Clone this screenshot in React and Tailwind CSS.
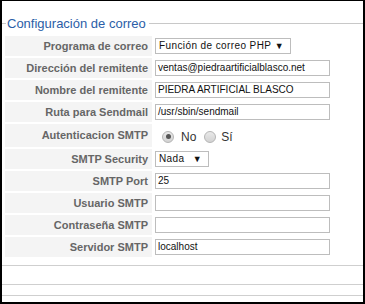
const font = "font-['Liberation_Sans',Arial,sans-serif]"

function Label({ children, tall }) {
  return (
    <div
      className={`w-[147px] ${tall ? "h-[23px]" : "h-[20px]"} bg-[#f4f4f4] flex items-center justify-end pr-[4px] text-[11px] font-bold text-[#666]`}
    >
      {children}
    </div>
  )
}

function TextBox({ value }) {
  return (
    <div className="w-[175px] h-[16px] border border-[#bdbdbd] bg-white flex items-center px-[2px] text-[10px] text-[#111] leading-none">
      {value}
    </div>
  )
}

function SelectBox({ value, width }) {
  return (
    <div
      className={`${width} h-[16px] border border-[#bdbdbd] bg-white flex items-center justify-between pl-[3px] pr-[6px] text-[10px] tracking-[0.4px] text-[#111] leading-none`}
    >
      <span>{value}</span>
      <span className="text-[9px]">▼</span>
    </div>
  )
}

function Radio({ checked }) {
  return (
    <div className="w-[12px] h-[12px] rounded-full border border-[#b5b5b5] bg-gradient-to-b from-[#e9e9e9] to-[#d2d2d2] flex items-center justify-center">
      {checked && <div className="w-[5px] h-[5px] rounded-full bg-[#555]" />}
    </div>
  )
}

function Row({ label, tall, children }) {
  return (
    <div className="flex items-center">
      <Label tall={tall}>{label}</Label>
      <div className="ml-[3px] flex items-center">{children}</div>
    </div>
  )
}

export default function App() {
  return (
    <div
      className={`${font} w-[365px] h-[304px] bg-white border-black border-t border-l-2 border-r-2 border-b-2 overflow-hidden flex flex-col`}
    >
      <div className="mt-[15px] h-[15px] flex items-center">
        <div className="w-[4px] h-px bg-[#c8c8c8]" />
        <span className="px-[1px] text-[13px] leading-none text-[#2b5ea7]">Configuración de correo</span>
        <div className="flex-1 ml-[2px] h-px bg-[#c8c8c8]" />
      </div>

      <div className="mt-[5px] pl-[3px] flex flex-col gap-[2px]">
        <Row label="Programa de correo">
          <SelectBox value="Función de correo PHP" width="w-[136px]" />
        </Row>
        <Row label="Dirección del remitente">
          <TextBox value="ventas@piedraartificialblasco.net" />
        </Row>
        <Row label="Nombre del remitente">
          <TextBox value="PIEDRA ARTIFICIAL BLASCO" />
        </Row>
        <Row label="Ruta para Sendmail">
          <TextBox value="/usr/sbin/sendmail" />
        </Row>
        <Row label="Autenticacion SMTP" tall>
          <div className="flex items-center pl-[7px] pt-[2px] text-[12px] text-[#333]">
            <Radio checked />
            <span className="ml-[7px]">No</span>
            <div className="ml-[8px]">
              <Radio />
            </div>
            <span className="ml-[5px]">Sí</span>
          </div>
        </Row>
        <Row label="SMTP Security">
          <SelectBox value="Nada" width="w-[54px]" />
        </Row>
        <Row label="SMTP Port">
          <TextBox value="25" />
        </Row>
        <Row label="Usuario SMTP">
          <TextBox value="" />
        </Row>
        <Row label="Contraseña SMTP">
          <TextBox value="" />
        </Row>
        <Row label="Servidor SMTP">
          <TextBox value="localhost" />
        </Row>
      </div>

      <div className="mt-[8px] h-px bg-[#cfcfcf]" />
      <div className="mt-[18px] h-px bg-[#cfcfcf]" />
      <div className="mt-[10px] h-px bg-[#cfcfcf]" />
    </div>
  )
}
